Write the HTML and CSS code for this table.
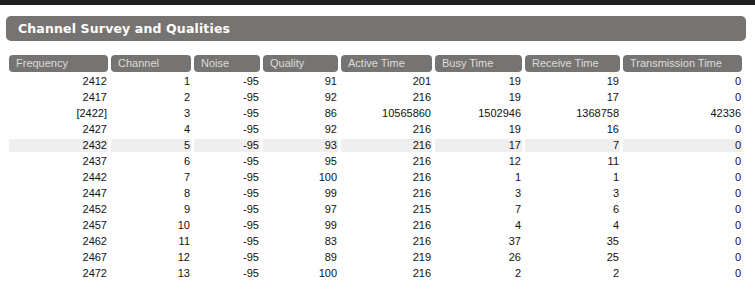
FILE: index.html
```html
<!DOCTYPE html>
<html>
<head>
<meta charset="utf-8">
<link rel="stylesheet" href="styles.css">
</head>
<body>
<div class="topbar"></div>
<div class="page">
  <h2 class="title">Channel Survey and Qualities</h2>
  <table class="survey">
    <thead>
      <tr>
        <th class="c-freq">Frequency</th>
        <th class="c-chan">Channel</th>
        <th class="c-noise">Noise</th>
        <th class="c-qual">Quality</th>
        <th class="c-active">Active Time</th>
        <th class="c-busy">Busy Time</th>
        <th class="c-recv">Receive Time</th>
        <th class="c-tx">Transmission Time</th>
      </tr>
    </thead>
    <tbody>
      <tr><td>2412</td><td>1</td><td>-95</td><td>91</td><td>201</td><td>19</td><td>19</td><td>0</td></tr>
      <tr><td>2417</td><td>2</td><td>-95</td><td>92</td><td>216</td><td>19</td><td>17</td><td>0</td></tr>
      <tr><td>[2422]</td><td>3</td><td>-95</td><td>86</td><td>10565860</td><td>1502946</td><td>1368758</td><td>42336</td></tr>
      <tr><td>2427</td><td>4</td><td>-95</td><td>92</td><td>216</td><td>19</td><td>16</td><td>0</td></tr>
      <tr class="hl"><td>2432</td><td>5</td><td>-95</td><td>93</td><td>216</td><td>17</td><td>7</td><td>0</td></tr>
      <tr><td>2437</td><td>6</td><td>-95</td><td>95</td><td>216</td><td>12</td><td>11</td><td>0</td></tr>
      <tr><td>2442</td><td>7</td><td>-95</td><td>100</td><td>216</td><td>1</td><td>1</td><td>0</td></tr>
      <tr><td>2447</td><td>8</td><td>-95</td><td>99</td><td>216</td><td>3</td><td>3</td><td>0</td></tr>
      <tr><td>2452</td><td>9</td><td>-95</td><td>97</td><td>215</td><td>7</td><td>6</td><td>0</td></tr>
      <tr><td>2457</td><td>10</td><td>-95</td><td>99</td><td>216</td><td>4</td><td>4</td><td>0</td></tr>
      <tr><td>2462</td><td>11</td><td>-95</td><td>83</td><td>216</td><td>37</td><td>35</td><td>0</td></tr>
      <tr><td>2467</td><td>12</td><td>-95</td><td>89</td><td>219</td><td>26</td><td>25</td><td>0</td></tr>
      <tr><td>2472</td><td>13</td><td>-95</td><td>100</td><td>216</td><td>2</td><td>2</td><td>0</td></tr>
    </tbody>
  </table>
</div>
</body>
</html>
```
FILE: styles.css
```css
html, body {
  margin: 0;
  padding: 0;
  background: #ffffff;
}
body {
  font-family: "Liberation Sans", Arial, sans-serif;
  font-size: 11px;
  color: #111111;
}
.topbar {
  height: 5px;
  background: #1f1f1f;
}
.page {
  padding: 11px 0 0 6px;
}
.title {
  margin: 0;
  width: 740px;
  height: 25px;
  box-sizing: border-box;
  padding-left: 12px;
  background: #767472;
  border-radius: 5px;
  color: #ffffff;
  font-family: "DejaVu Sans", Verdana, sans-serif;
  font-weight: bold;
  font-size: 12.5px;
  letter-spacing: 0.15px;
  line-height: 25px;
}
.survey {
  margin-top: 11px;
  border-collapse: separate;
  border-spacing: 3px;
  table-layout: fixed;
  width: 739px;
}
.survey th {
  box-sizing: border-box;
  background: #767472;
  color: #dcdcdc;
  font-weight: normal;
  text-align: left;
  height: 17px;
  line-height: 17px;
  padding: 0 0 0 7px;
  border-radius: 4px;
  white-space: nowrap;
  overflow: hidden;
}
.survey td {
  text-align: right;
  height: 13px;
  line-height: 13px;
  padding: 0 1px 0 0;
  white-space: nowrap;
}
.survey tr.hl td {
  background: #efefef;
}
.c-freq { width: 99px; }
.c-chan { width: 80px; }
.c-noise { width: 66px; }
.c-qual { width: 75px; }
.c-active { width: 91px; }
.c-busy { width: 87px; }
.c-recv { width: 95px; }
.c-tx { width: 119px; }
```
